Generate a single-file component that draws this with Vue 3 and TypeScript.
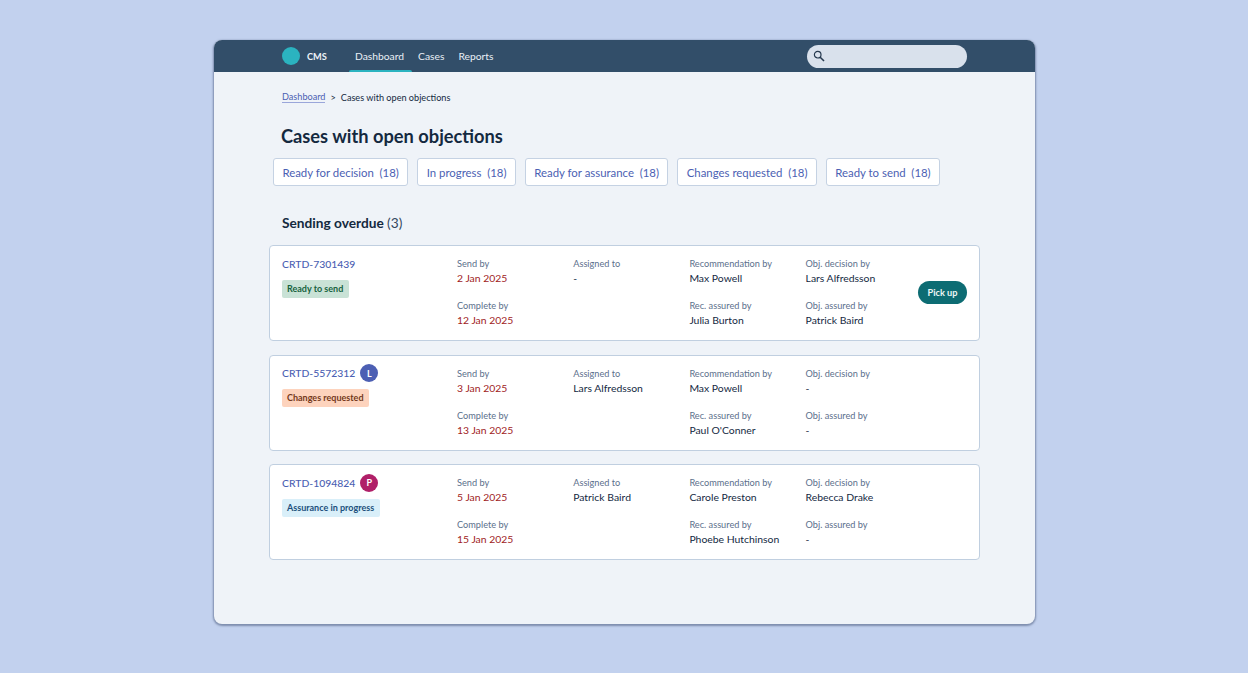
<script setup lang="ts">
interface CaseItem {
  id: string
  avatar?: { letter: string; color: string }
  status: string
  statusClass: string
  send: string
  complete: string
  assigned: string
  rec: string
  recAssured: string
  decision: string
  objAssured: string
  pick?: boolean
}
const navItems = [
  { label: 'Dashboard', active: true },
  { label: 'Cases', active: false },
  { label: 'Reports', active: false },
]
const tabs = ['Ready for decision', 'In progress', 'Ready for assurance', 'Changes requested', 'Ready to send']
const cases: CaseItem[] = [
  { id: 'CRTD-7301439', status: 'Ready to send', statusClass: 'green', send: '2 Jan 2025', complete: '12 Jan 2025', assigned: '-', rec: 'Max Powell', recAssured: 'Julia Burton', decision: 'Lars Alfredsson', objAssured: 'Patrick Baird', pick: true },
  { id: 'CRTD-5572312', avatar: { letter: 'L', color: '#4c5fb3' }, status: 'Changes requested', statusClass: 'orange', send: '3 Jan 2025', complete: '13 Jan 2025', assigned: 'Lars Alfredsson', rec: 'Max Powell', recAssured: "Paul O'Conner", decision: '-', objAssured: '-' },
  { id: 'CRTD-1094824', avatar: { letter: 'P', color: '#b01f68' }, status: 'Assurance in progress', statusClass: 'blue', send: '5 Jan 2025', complete: '15 Jan 2025', assigned: 'Patrick Baird', rec: 'Carole Preston', recAssured: 'Phoebe Hutchinson', decision: 'Rebecca Drake', objAssured: '-' },
]
</script>

<template>
  <div class="page">
    <div class="window">
      <header class="nav">
        <div class="brand">
          <span class="logo"></span>
          <span class="brand-name">CMS</span>
        </div>
        <nav class="links">
          <a v-for="n in navItems" :key="n.label" class="link" :class="{ active: n.active }">{{ n.label }}</a>
        </nav>
        <div class="search">
          <svg width="12" height="12" viewBox="0 0 12 12" fill="none" stroke="#26394f">
            <circle cx="4.7" cy="4.7" r="3.3" stroke-width="1.2" />
            <path d="M7.2 7.2 L11 11" stroke-width="1.6" />
          </svg>
        </div>
      </header>
      <main class="main">
        <div class="crumbs">
          <a class="crumb-link">Dashboard</a>
          <span class="sep">&gt;</span>
          <span>Cases with open objections</span>
        </div>
        <h1 class="title">Cases with open objections</h1>
        <div class="tabs">
          <button v-for="t in tabs" :key="t" class="tab"><span>{{ t }}</span><span>(18)</span></button>
        </div>
        <h2 class="section">Sending overdue <span class="count">(3)</span></h2>
        <div class="cards">
          <article v-for="c in cases" :key="c.id" class="card">
            <div class="col-id">
              <div class="id-row">
                <a class="case-id">{{ c.id }}</a>
                <span v-if="c.avatar" class="avatar" :style="{ background: c.avatar.color }">{{ c.avatar.letter }}</span>
              </div>
              <span class="badge" :class="c.statusClass">{{ c.status }}</span>
            </div>
            <div class="fields">
              <div class="field"><span class="lab">Send by</span><span class="val due">{{ c.send }}</span></div>
              <div class="field"><span class="lab">Assigned to</span><span class="val">{{ c.assigned }}</span></div>
              <div class="field"><span class="lab">Recommendation by</span><span class="val">{{ c.rec }}</span></div>
              <div class="field"><span class="lab">Obj. decision by</span><span class="val">{{ c.decision }}</span></div>
              <div class="field"><span class="lab">Complete by</span><span class="val due">{{ c.complete }}</span></div>
              <div class="field"></div>
              <div class="field"><span class="lab">Rec. assured by</span><span class="val">{{ c.recAssured }}</span></div>
              <div class="field"><span class="lab">Obj. assured by</span><span class="val">{{ c.objAssured }}</span></div>
            </div>
            <div class="action">
              <button v-if="c.pick" class="pick">Pick up</button>
            </div>
          </article>
        </div>
      </main>
    </div>
  </div>
</template>

<style>
html, body { margin: 0; background: #c2d1ee; }
</style>

<style scoped>
.page {
  width: 1248px;
  height: 673px;
  box-sizing: border-box;
  padding: 40px 213px 0 214px;
  font-family: Lato, "Liberation Sans", sans-serif;
  color: #14293f;
  overflow: hidden;
}
.window {
  height: 584px;
  background: #eff3f8;
  border-radius: 8px;
  box-shadow: 0 1px 2px 1px rgba(70, 85, 120, 0.55);
  overflow: hidden;
}
.nav {
  height: 32px;
  background: #324e69;
  display: flex;
  align-items: stretch;
  padding: 0 68px;
}
.brand { display: flex; align-items: center; gap: 7px; width: 67px; }
.logo { width: 18px; height: 18px; border-radius: 50%; background: #2bb3c0; }
.brand-name { color: #eef3f8; font-size: 9.2px; font-weight: 700; }
.links { display: flex; align-items: stretch; }
.link {
  color: #e9eff6;
  font-size: 10.3px;
  line-height: 32px;
  padding: 0 7px;
  position: relative;
}
.link.active { padding: 0 8px 0 6px; margin-right: -1px; }
.link.active::after {
  content: "";
  position: absolute;
  left: 0;
  right: 0;
  bottom: 0;
  height: 2px;
  background: #2bb3c0;
  border-radius: 2px 2px 0 0;
}
.search {
  margin: 4.5px 0 0 auto;
  width: 160px;
  height: 23px;
  background: #d9e1ec;
  border-radius: 12px;
  display: flex;
  align-items: center;
  padding-left: 6px;
  box-sizing: border-box;
}
.main { padding: 18.5px 55px 0 55px; }
.crumbs {
  margin-left: 13px;
  display: flex;
  align-items: center;
  font-size: 9.15px;
  line-height: 13px;
  height: 13px;
  color: #14293f;
}
.crumb-link { color: #4c5fb3; border-bottom: 1px solid #9aa6da; line-height: 11px; }
.sep { margin: 0 5px; }
.title {
  margin: 20.5px 0 0 12px;
  font-size: 18.25px;
  line-height: 24px;
  font-weight: 700;
  color: #14293f;
}
.tabs { display: flex; gap: 9px; margin: 10px 0 0 4px; }
.tab {
  height: 28px;
  box-sizing: border-box;
  padding: 0 8.4px;
  background: #fff;
  border: 1px solid #c5d2e3;
  border-radius: 3px;
  font-family: inherit;
  font-size: 11.4px;
  color: #4c5fb3;
  display: flex;
  align-items: center;
  gap: 5.7px;
}
.section {
  margin: 27px 0 0 13px;
  font-size: 13.7px;
  line-height: 20px;
  font-weight: 700;
  color: #14293f;
}
.count { font-weight: 400; color: #33475f; }
.cards { margin-top: 12px; display: flex; flex-direction: column; gap: 13.5px; }
.card {
  height: 96px;
  box-sizing: border-box;
  background: #fff;
  border: 1px solid #c0cfe0;
  border-radius: 4px;
  padding: 11px 12px 0 12px;
  display: flex;
}
.col-id { width: 175px; flex: none; }
.id-row { display: flex; align-items: center; gap: 5px; height: 13px; }
.case-id { color: #4c5fb3; font-size: 10.4px; font-weight: 500; }
.avatar {
  width: 18px;
  height: 18px;
  border-radius: 50%;
  flex: none;
  color: #fff;
  font-size: 9px;
  font-weight: 700;
  display: flex;
  align-items: center;
  justify-content: center;
}
.badge {
  display: table;
  margin-top: 9.5px;
  padding: 0 5.5px 0 5px;
  height: 18px;
  line-height: 18px;
  border-radius: 2px;
  font-size: 9px;
  font-weight: 700;
}
.green { background: #c9e2d6; color: #17633f; }
.orange { background: #fdd3bd; color: #74391b; }
.blue { background: #d9eff9; color: #1c4f7c; }
.fields {
  display: grid;
  grid-template-columns: repeat(3, 116.2px) 105px;
  grid-auto-rows: 42px;
  flex: none;
}
.field { display: flex; flex-direction: column; }
.lab { font-size: 9.2px; line-height: 14px; color: #5c708c; }
.val { font-size: 10.4px; line-height: 15px; color: #14293f; }
.due { color: #a01c24; }
.action { flex: 1; display: flex; justify-content: flex-end; align-items: center; padding-bottom: 13px; }
.pick {
  width: 49px;
  height: 23px;
  flex: none;
  border: none;
  border-radius: 12px;
  background: #0d6c73;
  color: #eef6f6;
  font-family: inherit;
  font-size: 9.2px;
  font-weight: 700;
  padding: 0;
}
</style>
